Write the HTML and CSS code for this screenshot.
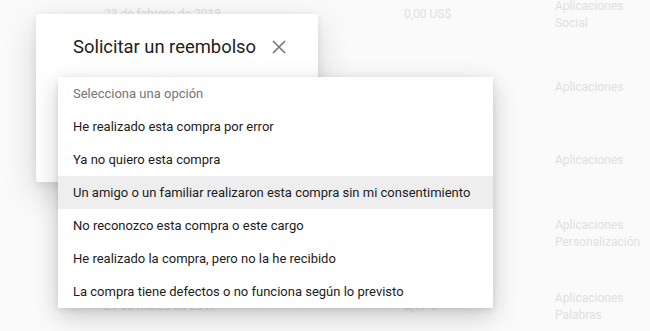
FILE: index.html
```html
<!DOCTYPE html>
<html lang="es">
<head>
    <meta charset="UTF-8">
    <title>Solicitar un reembolso</title>
    <link rel="stylesheet" href="styles.css">
</head>
<body class="main">
    <!-- purchase history behind the dialog -->
    <div class="history">
        <div class="hist-row">
            <div class="col-date">23 de febrero de 2018</div>
            <div class="col-price">0,00 US$</div>
            <div class="col-cat">Aplicaciones<br>Social</div>
        </div>
        <div class="hist-row">
            <div class="col-date">14 de enero de 2018</div>
            <div class="col-price">0,00 US$</div>
            <div class="col-cat">Aplicaciones</div>
        </div>
        <div class="hist-row">
            <div class="col-date">2 de diciembre de 2017</div>
            <div class="col-price">1,09 €</div>
            <div class="col-cat">Aplicaciones</div>
        </div>
        <div class="hist-row">
            <div class="col-date">8 de mayo de 2017</div>
            <div class="col-price">0,79 €</div>
            <div class="col-cat">Aplicaciones<br>Personalización</div>
        </div>
        <div class="hist-row">
            <div class="col-date">21 de marzo de 2017</div>
            <div class="col-price">3,17 €</div>
            <div class="col-cat">Aplicaciones<br>Palabras</div>
        </div>
    </div>

    <div class="dialog">
        <div class="dialog-head">
            <h2 class="dialog-title">Solicitar un reembolso</h2>
            <svg class="close-icon" width="14" height="14" viewBox="0 0 14 14">
                <path d="M1 1L13 13M13 1L1 13" stroke="#757575" stroke-width="1.6" fill="none"/>
            </svg>
        </div>
    </div>

    <ul class="menu">
        <li class="menu-item placeholder">Selecciona una opción</li>
        <li class="menu-item">He realizado esta compra por error</li>
        <li class="menu-item">Ya no quiero esta compra</li>
        <li class="menu-item active">Un amigo o un familiar realizaron esta compra sin mi consentimiento</li>
        <li class="menu-item">No reconozco esta compra o este cargo</li>
        <li class="menu-item">He realizado la compra, pero no la he recibido</li>
        <li class="menu-item">La compra tiene defectos o no funciona según lo previsto</li>
    </ul>
</body>
</html>
```

FILE: styles.css
```css
.main {
    margin: 0;
    background-color: #fafafa;
    font-family: Roboto, "Liberation Sans", sans-serif;
    font-size: 13px;
    overflow: hidden;
}

/* Background list */
.history {
    margin-top: -22px;
}

.hist-row {
    display: grid;
    grid-template-columns: 300px 151px 1fr;
    align-items: center;
    height: 73px;
    padding-left: 104px;
    color: #e0e0e0;
    font-size: 12px;
    line-height: 17px;
}

/* Dialog card */
.dialog {
    position: absolute;
    left: 36px;
    top: 14px;
    width: 282px;
    height: 168px;
    background-color: #fff;
    border-radius: 2px;
    box-shadow: 0 12px 34px rgba(0, 0, 0, 0.16), 0 2px 8px rgba(0, 0, 0, 0.08);
}

.dialog-head {
    display: flex;
    align-items: center;
    padding: 22px 0 0 37px;
}

.dialog-title {
    margin: 0;
    font-size: 18.4px;
    font-weight: 400;
    color: #212121;
}

.close-icon {
    margin-left: 16px;
}

/* Dropdown */
.menu {
    position: absolute;
    left: 58px;
    top: 77px;
    width: 435px;
    margin: 0;
    padding: 0;
    list-style: none;
    background-color: #fff;
    box-shadow: 0 8px 24px rgba(0, 0, 0, 0.2), 0 2px 6px rgba(0, 0, 0, 0.1);
}

.menu-item {
    height: 33px;
    line-height: 33px;
    padding-left: 15px;
    color: #1c1c1c;
    white-space: nowrap;
}

.menu-item.placeholder {
    color: #757575;
}

.menu-item.active {
    background-color: #eeeeee;
}
```
